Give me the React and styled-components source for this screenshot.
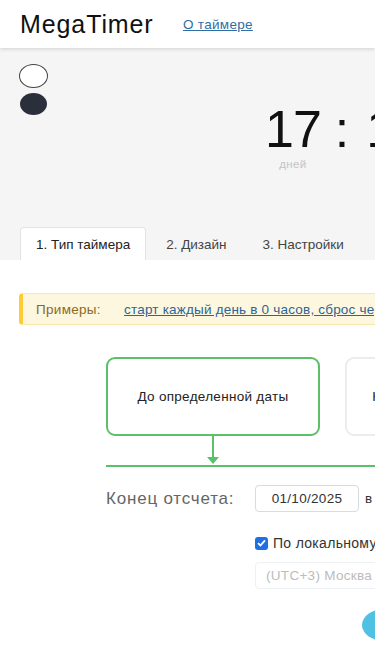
import React from "react";
import styled, { createGlobalStyle } from "styled-components";

const Global = createGlobalStyle`
  html, body { margin: 0; padding: 0; background: #fff; }
  body {
    width: 375px;
    overflow-x: hidden;
    font-family: "Liberation Sans", Arial, sans-serif;
    color: #333;
  }
  * { box-sizing: border-box; }
`;

const Page = styled.div`
  width: 375px;
  overflow: hidden;
`;

const Header = styled.header`
  position: relative;
  z-index: 2;
  height: 48px;
  display: flex;
  align-items: center;
  padding-left: 20px;
  background: #fff;
  box-shadow: 0 1px 4px rgba(0, 0, 0, 0.15);
`;

const Logo = styled.div`
  font-size: 25px;
  letter-spacing: 0.9px;
  color: #111;
  width: 163px;
  white-space: nowrap;
`;

const HeaderLink = styled.a`
  font-size: 13.5px;
  color: #2f6ea5;
  text-decoration: underline;
  letter-spacing: 0.3px;
  margin-top: 1px;
`;

const Hero = styled.section`
  height: 212px;
  background: #f5f5f5;
  display: flex;
  flex-direction: column;
  padding-top: 16px;
`;

const HeroTop = styled.div`
  display: flex;
  align-items: flex-start;
  padding-left: 19px;
  white-space: nowrap;
`;

const Swatches = styled.div`
  display: flex;
  flex-direction: column;
  gap: 5px;
  flex: none;
`;

const Swatch = styled.div`
  width: ${(p) => (p.$dark ? "27px" : "29px")};
  height: ${(p) => (p.$dark ? "22px" : "24px")};
  margin-left: ${(p) => (p.$dark ? "1px" : "0")};
  border-radius: 50%;
  background: ${(p) => (p.$dark ? "#2b2f3b" : "#fff")};
  border: ${(p) => (p.$dark ? "none" : "1px solid #444")};
`;

const Timer = styled.div`
  display: flex;
  align-items: flex-start;
  margin-left: 217px;
  margin-top: 39px;
  flex: none;
`;

const Unit = styled.div`
  display: flex;
  flex-direction: column;
  align-items: center;
`;

const Digits = styled.div`
  font-size: 52px;
  line-height: 1;
  color: #111;
  letter-spacing: -1px;
`;

const UnitLabel = styled.div`
  font-size: 11.5px;
  line-height: 1.1;
  color: #c4c4c4;
  margin-top: 3px;
  letter-spacing: 0.4px;
`;

const Sep = styled.div`
  font-size: 52px;
  line-height: 1;
  color: #111;
  padding: 0 17px 0 14px;
`;

const Tabs = styled.nav`
  margin-top: auto;
  display: flex;
  gap: 4px;
  padding-left: 20px;
  white-space: nowrap;
`;

const Tab = styled.div`
  height: 33px;
  display: flex;
  align-items: center;
  padding: 0 15px;
  font-size: 13.5px;
  color: ${(p) => (p.$active ? "#222" : "#444")};
  background: ${(p) => (p.$active ? "#fff" : "transparent")};
  border: 1px solid ${(p) => (p.$active ? "#e3e3e3" : "transparent")};
  border-bottom: none;
  border-radius: 4px 4px 0 0;
  flex: none;
`;

const Body = styled.main`
  padding: 33px 0 40px 19px;
`;

const Examples = styled.div`
  height: 32px;
  width: 420px;
  display: flex;
  align-items: center;
  background: #fdf7df;
  border: 1px solid #fbe7a8;
  border-left: 4px solid #fdcb33;
  border-radius: 4px;
  padding-left: 13px;
  white-space: nowrap;
  font-size: 13.5px;
`;

const ExLabel = styled.span`
  color: #8a6a1f;
  width: 88px;
  flex: none;
  letter-spacing: 0.3px;
`;

const ExLink = styled.a`
  color: #2f6496;
  text-decoration: underline;
  letter-spacing: 0.2px;
`;

const Flow = styled.div`
  margin-left: 87px;
  margin-top: 32px;
  width: 420px;
`;

const Cards = styled.div`
  display: flex;
  gap: 25px;
`;

const Card = styled.div`
  width: 214px;
  height: 79px;
  flex: none;
  display: flex;
  align-items: center;
  justify-content: center;
  border-radius: 9px;
  border: 2px solid ${(p) => (p.$active ? "#5cbf6a" : "#ececec")};
  font-size: 13.5px;
  letter-spacing: 0.3px;
  color: #222;
  white-space: nowrap;
`;

const ArrowWrap = styled.div`
  width: 214px;
  height: 29px;
  display: flex;
  justify-content: center;
`;

const Rule = styled.div`
  height: 2px;
  background: #5cbf6a;
`;

const FormRow = styled.div`
  display: flex;
  align-items: center;
  margin-top: ${(p) => p.$mt || 0}px;
  white-space: nowrap;
`;

const FieldLabel = styled.div`
  width: 149px;
  flex: none;
  font-size: 17px;
  letter-spacing: 0.8px;
  color: #666;
`;

const Spacer = styled.div`
  width: 149px;
  flex: none;
`;

const DateInput = styled.div`
  width: 104px;
  height: 27px;
  flex: none;
  display: flex;
  align-items: center;
  justify-content: center;
  border: 1px solid #d3dde3;
  border-radius: 4px;
  font-size: 13.5px;
  letter-spacing: 0.3px;
  color: #333;
`;

const AtText = styled.span`
  margin-left: 6px;
  font-size: 13.5px;
  color: #333;
`;

const Check = styled.div`
  width: 13px;
  height: 13px;
  flex: none;
  border-radius: 3px;
  background: #1f6fe5;
  display: flex;
  align-items: center;
  justify-content: center;
`;

const CheckLabel = styled.span`
  margin-left: 5px;
  font-size: 14px;
  letter-spacing: 0.3px;
  color: #333;
`;

const SelectBox = styled.div`
  width: 200px;
  height: 27px;
  flex: none;
  display: flex;
  align-items: center;
  padding-left: 10px;
  border: 1px solid #edf1f3;
  border-radius: 4px;
  font-size: 13.5px;
  letter-spacing: 0.3px;
  color: #bcbcbc;
`;

const RoundBtn = styled.div`
  width: 44px;
  height: 32px;
  flex: none;
  margin-left: 107px;
  border-radius: 50%;
  background: #4fc1e2;
`;

export default function App() {
  return (
    <Page>
      <Global />
      <Header>
        <Logo>MegaTimer</Logo>
        <HeaderLink href="#">О таймере</HeaderLink>
      </Header>
      <Hero>
        <HeroTop>
          <Swatches>
            <Swatch />
            <Swatch $dark />
          </Swatches>
          <Timer>
            <Unit>
              <Digits>17</Digits>
              <UnitLabel>дней</UnitLabel>
            </Unit>
            <Sep>:</Sep>
            <Unit>
              <Digits>12</Digits>
              <UnitLabel>часов</UnitLabel>
            </Unit>
          </Timer>
        </HeroTop>
        <Tabs>
          <Tab $active>1. Тип таймера</Tab>
          <Tab>2. Дизайн</Tab>
          <Tab>3. Настройки</Tab>
        </Tabs>
      </Hero>
      <Body>
        <Examples>
          <ExLabel>Примеры:</ExLabel>
          <ExLink href="#">старт каждый день в 0 часов, сброс через 24 часа</ExLink>
        </Examples>
        <Flow>
          <Cards>
            <Card $active>До определенной даты</Card>
            <Card>На определенное время</Card>
          </Cards>
          <ArrowWrap>
            <svg width="14" height="29" viewBox="0 0 14 29">
              <line x1="7" y1="0" x2="7" y2="24" stroke="#5cbf6a" strokeWidth="2" />
              <polygon points="1,21 13,21 7,28" fill="#5cbf6a" />
            </svg>
          </ArrowWrap>
          <Rule />
          <FormRow $mt={18}>
            <FieldLabel>Конец отсчета:</FieldLabel>
            <DateInput>01/10/2025</DateInput>
            <AtText>в</AtText>
          </FormRow>
          <FormRow $mt={23}>
            <Spacer />
            <Check>
              <svg width="9" height="8" viewBox="0 0 9 8">
                <path d="M1 4.2 L3.4 6.5 L8 1.3" fill="none" stroke="#fff" strokeWidth="1.8" />
              </svg>
            </Check>
            <CheckLabel>По локальному времени</CheckLabel>
          </FormRow>
          <FormRow $mt={11}>
            <Spacer />
            <SelectBox>(UTC+3) Москва</SelectBox>
          </FormRow>
          <FormRow $mt={20}>
            <Spacer />
            <RoundBtn />
          </FormRow>
        </Flow>
      </Body>
    </Page>
  );
}
